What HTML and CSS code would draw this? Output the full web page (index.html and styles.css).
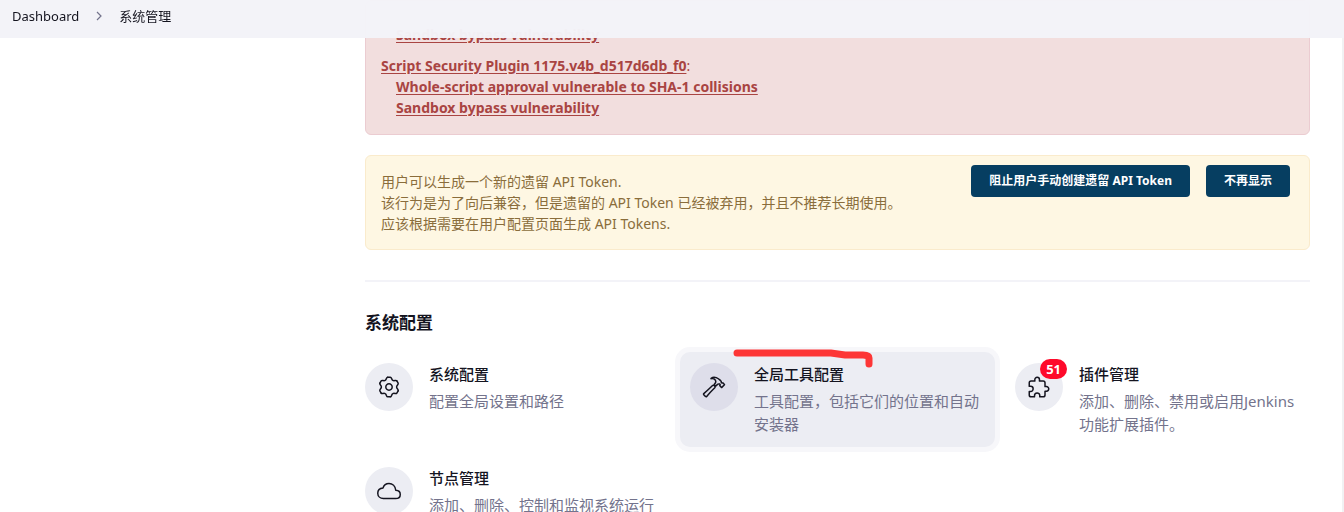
FILE: index.html
```
<!DOCTYPE html>
<html lang="zh-CN">
<head>
<meta charset="utf-8">
<title>系统管理 [Jenkins]</title>
<link rel="stylesheet" href="styles.css">
</head>
<body>
<nav class="breadcrumbs" aria-label="breadcrumb">
  <a href="#">Dashboard</a>
  <svg class="chevron" viewBox="0 0 10 10" aria-hidden="true"><path d="M3 1l4 4-4 4"/></svg>
  <a href="#">系统管理</a>
</nav>
<main class="main-panel">
  <section class="alert alert-danger">
    <ul class="issues">
      <li><a href="#">Sandbox bypass vulnerability</a></li>
    </ul>
    <p class="plugin"><a href="#">Script Security Plugin 1175.v4b_d517d6db_f0</a>:</p>
    <ul class="issues">
      <li><a href="#">Whole-script approval vulnerable to SHA-1 collisions</a></li>
      <li><a href="#">Sandbox bypass vulnerability</a></li>
    </ul>
  </section>
  <section class="alert alert-warning">
    <p class="message">用户可以生成一个新的遗留 API Token.<br>该行为是为了向后兼容，但是遗留的 API Token 已经被弃用，并且不推荐长期使用。<br>应该根据需要在用户配置页面生成 API Tokens.</p>
    <div class="actions">
      <button type="button">阻止用户手动创建遗留 API Token</button>
      <button type="button">不再显示</button>
    </div>
  </section>
  <hr class="divider">
  <h2 class="section-title">系统配置</h2>
  <div class="tiles">
    <a class="tile" href="#">
      <span class="tile-icon">
        <svg viewBox="-12 -12 24 24" aria-hidden="true" class="gear">
          <defs><path id="tooth" d="M-1.3-9.8H1.3C2.8-9.8 2.3-7.4 3.8-6.6C5.26-5.69 7.09-7.32 7.84-6.03"/></defs>
          <use href="#tooth"/><use href="#tooth" transform="rotate(60)"/><use href="#tooth" transform="rotate(120)"/><use href="#tooth" transform="rotate(180)"/><use href="#tooth" transform="rotate(240)"/><use href="#tooth" transform="rotate(300)"/>
          <circle r="3.2"/>
        </svg>
      </span>
      <span class="tile-text"><span class="tile-title">系统配置</span><span class="tile-desc">配置全局设置和路径</span></span>
    </a>
    <a class="tile tile-active" href="#">
      <span class="tile-icon">
        <svg viewBox="0 0 512 512" aria-hidden="true"><path d="M277.42 247a24.68 24.68 0 00-4.08-5.47L255 223.44a21.63 21.63 0 00-6.56-4.57 20.93 20.93 0 00-23.28 4.27c-6.36 6.26-18 17.68-39 38.43C146 301.3 71.43 367.89 37.71 396.29a16 16 0 00-1.09 23.54l39 39.43a16.13 16.13 0 0023.67-.89c29.24-34.37 96.3-109 136-148.23 20.39-20.06 31.82-31.58 38.29-37.94a21.76 21.76 0 003.84-25.2zM478.43 201l-34.31-34a5.44 5.44 0 00-4-1.59 5.59 5.59 0 00-4 1.59h0a11.41 11.41 0 01-9.55 3.27c-4.48-.49-9.25-1.88-12.33-4.86-7-6.86 1.09-20.36-5.07-29a242.88 242.88 0 00-23.08-26.72c-7.06-7-34.81-33.47-81.55-52.53a123.79 123.79 0 00-47-9.24c-26.35 0-46.61 11.76-54 18.51-5.88 5.32-12 13.77-12 13.77a91.29 91.29 0 0110.81-3.2 79.53 79.53 0 0123.28-1.49C241.19 76.8 259.94 84.1 270 92c16.21 13 23.18 30.39 24.27 52.83.8 16.69-15.23 37.76-30.44 54.94a7.85 7.85 0 00.4 10.83l21.24 21.23a8 8 0 0011.14.1c13.93-13.51 31.09-28.47 40.82-34.46s17.58-7.68 21.35-8.09a35.71 35.71 0 0121.3 4.62 13.65 13.65 0 013.08 2.38c6.46 6.56 6.07 17.28-.5 23.74l-2 1.89a5.5 5.5 0 000 7.84l34.31 34a5.5 5.5 0 004 1.58 5.65 5.65 0 004-1.58L478.43 209a5.82 5.82 0 000-8z"/></svg>
      </span>
      <span class="tile-text"><span class="tile-title">全局工具配置</span><span class="tile-desc">工具配置，包括它们的位置和自动安装器</span></span>
      <svg class="marker" viewBox="0 0 140 20" aria-hidden="true"><path d="M4 5H98L112 7L130 7Q136 7 136 10V16"/></svg>
    </a>
    <a class="tile" href="#">
      <span class="tile-icon">
        <svg viewBox="0 0 512 512" aria-hidden="true"><path d="M413.66 246.1H386a2 2 0 01-2-2v-77.24A38.86 38.86 0 00345.14 128H267.9a2 2 0 01-2-2V98.34c0-27.14-21.5-49.86-48.64-50.33a49.53 49.53 0 00-50.4 49.51V126a2 2 0 01-2 2H87.62A39.74 39.74 0 0048 167.62V238a2 2 0 002 2h26.91c29.37 0 53.68 25.48 54.09 54.85.42 29.87-23.51 57.15-53.29 57.15H50a2 2 0 00-2 2v70.38A39.74 39.74 0 0087.62 464H158a2 2 0 002-2v-20.93c0-30.28 24.75-56.35 55-57.06 30.1-.7 57 20.31 57 50.28V462a2 2 0 002 2h71.14A38.86 38.86 0 00384 425.14v-78a2 2 0 012-2h28.48c27.63 0 49.52-22.67 49.52-50.4s-23.2-48.64-50.34-48.64z"/></svg>
        <span class="badge">51</span>
      </span>
      <span class="tile-text"><span class="tile-title">插件管理</span><span class="tile-desc">添加、删除、禁用或启用Jenkins功能扩展插件。</span></span>
    </a>
    <a class="tile" href="#">
      <span class="tile-icon">
        <svg viewBox="0 0 512 512" aria-hidden="true"><path d="M400 240c-8.89-89.54-71-144-144-144-69 0-113.44 48.2-128 96-60 6-112 43.59-112 112 0 66 54 112 120 112h260c55 0 100-27.44 100-88 0-59.82-53-85.76-96-88z"/></svg>
      </span>
      <span class="tile-text"><span class="tile-title">节点管理</span><span class="tile-desc">添加、删除、控制和监视系统运行</span></span>
    </a>
  </div>
</main>
</body>
</html>
```
FILE: styles.css
```
* { box-sizing: border-box; }
body {
  margin: 0;
  height: 100vh;
  overflow: hidden;
  background: #fff;
  border-right: 2px solid #f1f1f3;
  color: #14141f;
  font: 14px/21px "Noto Sans", "Noto Sans CJK SC", sans-serif;
}
a { color: inherit; }
p, ul, h2 { margin: 0; }
.breadcrumbs {
  position: fixed;
  z-index: 2;
  top: 0;
  left: 0;
  right: 0;
  height: 38px;
  padding: 0 12px 6px;
  display: flex;
  align-items: center;
  gap: 15px;
  background: rgba(243, 243, 248, 0.98);
  font-size: 13px;
}
.breadcrumbs a { text-decoration: none; }
.chevron {
  width: 10px;
  height: 10px;
  fill: none;
  stroke: #73738c;
  stroke-width: 1.2;
}
.main-panel { padding: 0 32px 0 365px; }
.alert {
  border: 1px solid;
  border-radius: 6px;
  margin-bottom: 20px;
  padding: 15px;
}
.alert-danger {
  padding-top: 23px;
  padding-bottom: 16px;
  background: #f2dede;
  border-color: #ebccd1;
  color: #a94442;
}
.alert-danger a {
  font-weight: 700;
  text-underline-offset: 2px;
}
.issues {
  list-style: none;
  padding-left: 15px;
}
.plugin { margin-top: 10px; }
.alert-warning {
  display: flex;
  align-items: flex-start;
  gap: 16px;
  padding: 9px 19px 15px 15px;
  background: #fef7e3;
  border-color: #faebcc;
  color: #8a6d3b;
}
.message {
  flex: 1;
  padding-top: 6px;
}
.actions { display: flex; gap: 16px; }
.actions button {
  height: 32px;
  padding: 0 18px;
  border: 0;
  border-radius: 4px;
  background: #063e61;
  color: #fff;
  font: 700 12px/20px "Noto Sans", "Noto Sans CJK SC", sans-serif;
}
.divider {
  height: 2px;
  margin: 30px 0;
  border: 0;
  background: #f3f3f8;
}
.section-title {
  font-size: 17px;
  line-height: 22px;
  font-weight: 700;
}
.tiles {
  display: grid;
  grid-template-columns: repeat(3, 1fr);
  gap: 9px 10px;
  margin: 18px -10px 0;
}
.tile {
  position: relative;
  display: flex;
  gap: 16px;
  min-height: 95px;
  padding: 11px 12px 11px 10px;
  border-radius: 10px;
  text-decoration: none;
}
.tile-active {
  background: #ecedf3;
  box-shadow: 0 0 0 5px #f7f7fa;
}
.tile-icon {
  position: relative;
  flex: none;
  display: grid;
  place-items: center;
  width: 48px;
  height: 48px;
  border-radius: 50%;
  background: #ecedf3;
}
.tile-active .tile-icon { background: #dedeea; }
.tile-icon svg {
  width: 24px;
  height: 24px;
  fill: none;
  stroke: #14141f;
  stroke-width: 32;
  stroke-linecap: round;
  stroke-linejoin: round;
}
.tile-icon .gear { stroke-width: 1.5; }
.badge {
  position: absolute;
  top: -4px;
  right: -4px;
  padding: 0 6px;
  border-radius: 10px;
  background: #fe0a2b;
  color: #fff;
  font-size: 13px;
  font-weight: 700;
  line-height: 20px;
}
.tile-text {
  display: flex;
  flex-direction: column;
  font-size: 15px;
  line-height: 23px;
}
.tile-title { font-weight: 500; margin-bottom: 4px; }
.tile-desc { color: #73738c; }
.marker {
  position: absolute;
  top: -4px;
  left: 53px;
  width: 140px;
  height: 20px;
  fill: none;
  stroke: #fd3636;
  stroke-width: 7;
  stroke-linecap: round;
}
```
